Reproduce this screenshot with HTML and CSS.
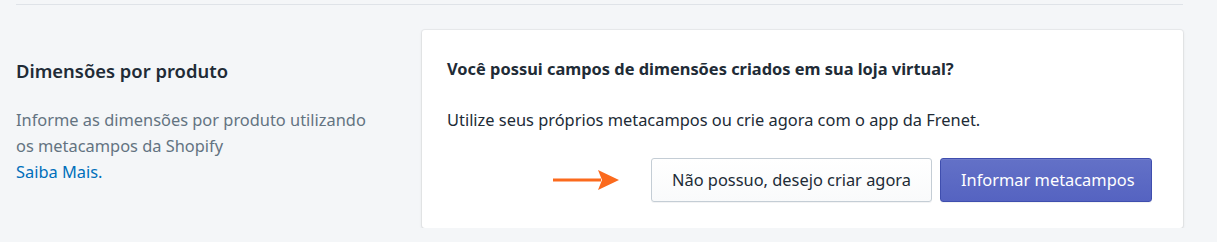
FILE: index.html
```html
<!DOCTYPE html>
<html lang="pt-BR">
<head>
<meta charset="utf-8">
<title>Dimensões por produto</title>
<link rel="stylesheet" href="styles.css">
</head>
<body>
<div class="page">
  <div class="divider"></div>
  <div class="section">
    <div class="annotation">
      <h2 class="annotation-title">Dimensões por produto</h2>
      <p class="annotation-text">Informe as dimensões por produto utilizando<br>os metacampos da Shopify<br><a class="link" href="#">Saiba Mais.</a></p>
    </div>
    <div class="card">
      <h3 class="card-heading">Você possui campos de dimensões criados em sua loja virtual?</h3>
      <p class="card-text">Utilize seus próprios metacampos ou crie agora com o app da Frenet.</p>
      <div class="actions">
        <svg class="arrow" width="66" height="22" viewBox="0 0 66 22" aria-hidden="true">
          <rect x="0" y="9.5" width="48" height="3" fill="#fb6a1d"/>
          <path d="M45 1 L66 11 L45 21 L49 11 Z" fill="#fb6a1d"/>
        </svg>
        <button class="btn btn-secondary">Não possuo, desejo criar agora</button>
        <button class="btn btn-primary">Informar metacampos</button>
      </div>
    </div>
  </div>
</div>
</body>
</html>
```

FILE: styles.css
```css
html, body {
  margin: 0;
  padding: 0;
  background: #f4f6f8;
}
body {
  font-family: "Noto Sans", "Open Sans", sans-serif;
  color: #212b36;
  -webkit-font-smoothing: antialiased;
}
.page {
  width: 1167px;
  padding: 4px 0 0 16px;
}
.divider {
  height: 1px;
  background: #dfe3e8;
}
.section {
  display: flex;
  padding-top: 25px;
}
.annotation {
  width: 406px;
  flex: none;
}
.annotation-title {
  margin: 29px 0 0;
  font-size: 18.4px;
  font-weight: 600;
  line-height: 24px;
  color: #212b36;
}
.annotation-text {
  margin: 24px 0 0;
  font-size: 16.4px;
  line-height: 26px;
  color: #637381;
}
.link {
  color: #006fbb;
  text-decoration: none;
}
.card {
  flex: 1;
  height: 198px;
  box-sizing: border-box;
  background: #fff;
  border-radius: 3px;
  box-shadow: 0 0 0 1px rgba(63, 63, 68, 0.05), 0 1px 3px 0 rgba(63, 63, 68, 0.15);
  padding: 28px 31px 0 25px;
}
.card-heading {
  margin: 0;
  font-size: 16.4px;
  font-weight: 700;
  line-height: 22px;
}
.card-text {
  margin: 29px 0 0;
  font-size: 16.4px;
  line-height: 22px;
  color: #212b36;
}
.actions {
  display: flex;
  justify-content: flex-end;
  align-items: center;
  gap: 8px;
  margin-top: 27px;
}
.arrow {
  display: block;
  margin-right: 24px;
}
.btn {
  height: 44px;
  box-sizing: border-box;
  padding: 0 20px;
  border-radius: 3px;
  font-family: inherit;
  font-size: 16.4px;
  line-height: 20px;
  cursor: pointer;
  white-space: nowrap;
}
.btn-secondary {
  width: 281px;
  color: #212b36;
  background: linear-gradient(to bottom, #fff, #f9fafb);
  border: 1px solid #c4cdd5;
  box-shadow: 0 1px 0 0 rgba(22, 29, 37, 0.05);
}
.btn-primary {
  width: 212px;
  color: #fff;
  background: linear-gradient(to bottom, #6371c7, #5563c1);
  border: 1px solid #3f4eae;
  box-shadow: inset 0 1px 0 0 #6f7bcb, 0 1px 0 0 rgba(22, 29, 37, 0.05);
}
```
